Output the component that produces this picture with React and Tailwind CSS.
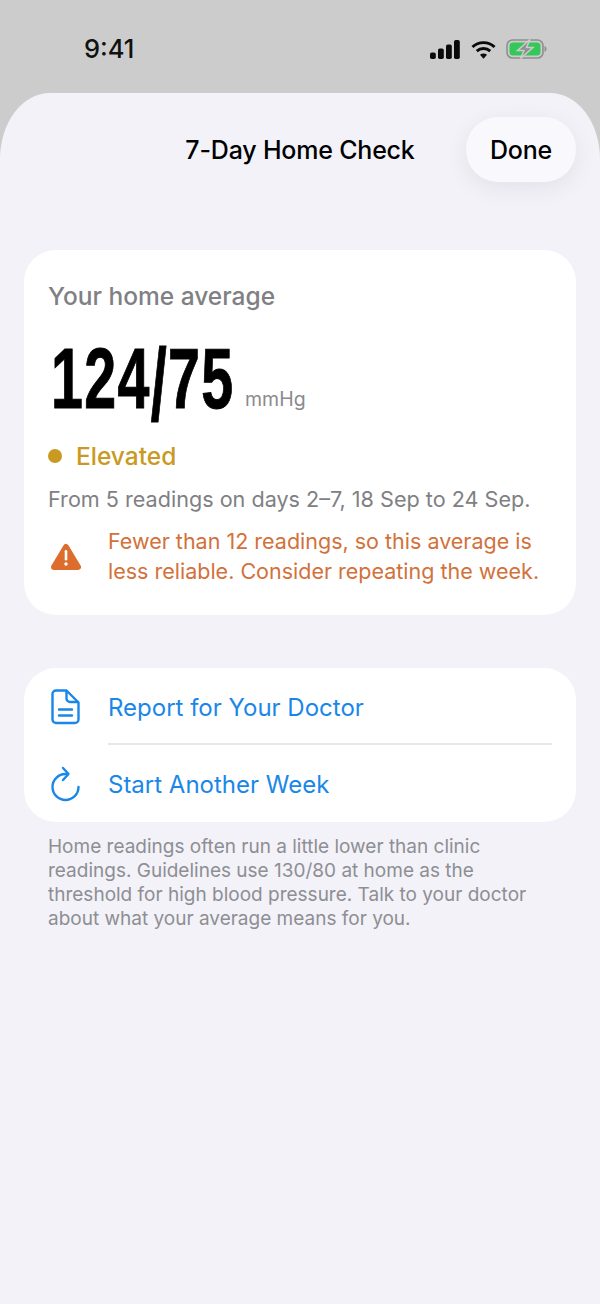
export default function App() {
  return (
    <div className="w-[600px] h-[1304px] overflow-hidden bg-[#cccccc] flex flex-col text-black" style={{ fontFamily: 'Inter, "Noto Sans", sans-serif' }}>
      <div className="h-[93px] shrink-0 pl-[84px] pr-[53px] pt-[34px] flex justify-between items-start">
        <span className="text-[25.500px] leading-[30px] font-medium text-[#111]">9:41</span>
        <div className="flex items-center gap-[10.500px] pt-[5px]">
          <svg width="30" height="19" viewBox="0 0 30 19" fill="#0a0a0a">
            <rect x="0" y="12.500" width="5.800" height="6.500" rx="1.800" />
            <rect x="8" y="8.500" width="5.800" height="10.500" rx="1.800" />
            <rect x="16" y="4.500" width="5.800" height="14.500" rx="1.800" />
            <rect x="24" y="0" width="5.800" height="19" rx="1.800" />
          </svg>
          <svg width="25" height="19" viewBox="0 0 26 19" fill="none" stroke="#0a0a0a" strokeWidth="3">
            <path d="M1.500 7C7.800 .8 18.200 .8 24.500 7" />
            <path d="M6 11.200C10 7.500 16 7.500 20 11.200" />
            <path d="M13 19L9.300 15C11.500 13.200 14.500 13.200 16.700 15Z" fill="#0a0a0a" stroke="none" />
          </svg>
          <svg width="41" height="20" viewBox="0 0 41 20">
            <rect x="1" y="1" width="36" height="18" rx="5.500" fill="none" stroke="#8f8f8f" strokeWidth="1.600" />
            <rect x="3.500" y="3.500" width="31" height="13" rx="3.500" fill="#34c759" />
            <path d="M38.500 7v6c1.300-.4 2-1.600 2-3s-.7-2.600-2-3z" fill="#8f8f8f" />
            <path d="M24 0.500L11.500 11.500H18L14.500 19.500L27 8.500H20.500Z" fill="#8f8f8f" stroke="#cccccc" strokeWidth="1.500" />
          </svg>
        </div>
      </div>

      <div className="flex-1 bg-[#f2f2f8] rounded-tl-[50px_66px] rounded-tr-[50px_66px] px-[24px] pt-[24px]">
        <div className="grid grid-cols-[1fr_auto_1fr] items-center">
          <div />
          <h1 className="text-[25px] leading-[30px] font-medium tracking-[-0.2px] whitespace-nowrap pt-[1px]">7-Day Home Check</h1>
          <div className="flex justify-end">
            <button className="w-[110px] h-[65px] rounded-[32px] bg-[#f9f8fd] text-[25px] font-medium tracking-[-0.2px] pt-[2px] shadow-[0_6px_24px_rgba(0,0,0,0.07)]">Done</button>
          </div>
        </div>

        <section className="mt-[68px] h-[365px] bg-white rounded-[32px] px-[24px] pt-[30px]">
          <p className="text-[24.500px] leading-[32px] font-medium text-[#808084]">Your home average</p>
          <div className="mt-[25px] h-[92px] flex items-start">
            <div className="w-[197px] shrink-0 pl-[3px]">
              <span className="block origin-left scale-x-[0.675] text-[85px] leading-[84px] font-bold tracking-[2px] whitespace-nowrap [-webkit-text-stroke:1px_black]" style={{ fontFamily: '"Liberation Sans", sans-serif' }}>
                124<span className="inline-block origin-[50%_15%] scale-y-[1.2]">/</span>75
              </span>
            </div>
            <span className="text-[19.500px] leading-[24px] text-[#8a8a8e] mt-[50px]">mmHg</span>
          </div>
          <div className="mt-[11px] flex items-center gap-[14px]">
            <span className="w-[14px] h-[14px] rounded-full bg-[#c99a21]" />
            <span className="text-[24.500px] leading-[32px] font-medium text-[#c99a21]">Elevated</span>
          </div>
          <p className="mt-[13px] text-[21.600px] leading-[28px] text-[#808084] whitespace-nowrap">From 5 readings on days 2–7, 18 Sep to 24 Sep.</p>
          <div className="mt-[13px] flex items-center gap-[27px]">
            <svg width="30" height="28" viewBox="0 0 30 28" className="shrink-0 ml-[3px] mt-[1px]">
              <path d="M15 4L27 24H3Z" fill="#dd6d2d" stroke="#dd6d2d" strokeWidth="6" strokeLinejoin="round" />
              <rect x="13.700" y="7" width="2.600" height="10.500" rx="1.300" fill="#fff" />
              <circle cx="15" cy="21" r="1.700" fill="#fff" />
            </svg>
            <p className="text-[21.500px] leading-[30px] text-[#d2713a] whitespace-nowrap">Fewer than 12 readings, so this average is<br />less reliable. Consider repeating the week.</p>
          </div>
        </section>

        <section className="mt-[53px] h-[154px] bg-white rounded-[32px] pl-[24px] flex flex-col">
          <div className="h-[77px] flex items-center gap-[28px] pr-[24px] relative">
            <svg width="29" height="36" viewBox="0 0 29 36" fill="none" stroke="#1a87e8" strokeWidth="2.400" strokeLinecap="round" strokeLinejoin="round" className="shrink-0 ml-[3px] mt-[1px]">
              <path d="M5 1.500H15.500L27.500 13.500V30.500a3.500 3.500 0 0 1-3.500 3.500H5A3.500 3.500 0 0 1 1.500 30.500V5A3.500 3.500 0 0 1 5 1.500Z" />
              <path d="M15.500 2V9.500a3.500 3.500 0 0 0 3.500 3.500H27" />
              <path d="M8 20.500H21M8 26.500H21" />
            </svg>
            <span className="text-[24px] leading-[32px] text-[#1a87e8] pt-[2px]">Report for Your Doctor</span>
            <div className="absolute left-[60px] right-[24px] bottom-0 h-[2px] bg-[#e8e8ec]" />
          </div>
          <div className="h-[77px] flex items-center gap-[28px]">
            <svg width="29" height="36" viewBox="0 0 29 36" fill="none" stroke="#1a87e8" strokeWidth="2.400" strokeLinecap="round" strokeLinejoin="round" className="shrink-0 ml-[3px]">
              <path d="M27.500 21A13 13 0 1 1 14.500 8H16" />
              <path d="M12 2L17.500 8L12 14" />
            </svg>
            <span className="text-[24px] leading-[32px] text-[#1a87e8] pt-[2px]">Start Another Week</span>
          </div>
        </section>

        <p className="mt-[13px] px-[24px] text-[19px] leading-[24px] text-[#8e8e93] whitespace-nowrap">
          Home readings often run a little lower than clinic<br />
          readings. Guidelines use 130/80 at home as the<br />
          threshold for high blood pressure. Talk to your doctor<br />
          about what your average means for you.
        </p>
      </div>
    </div>
  );
}
